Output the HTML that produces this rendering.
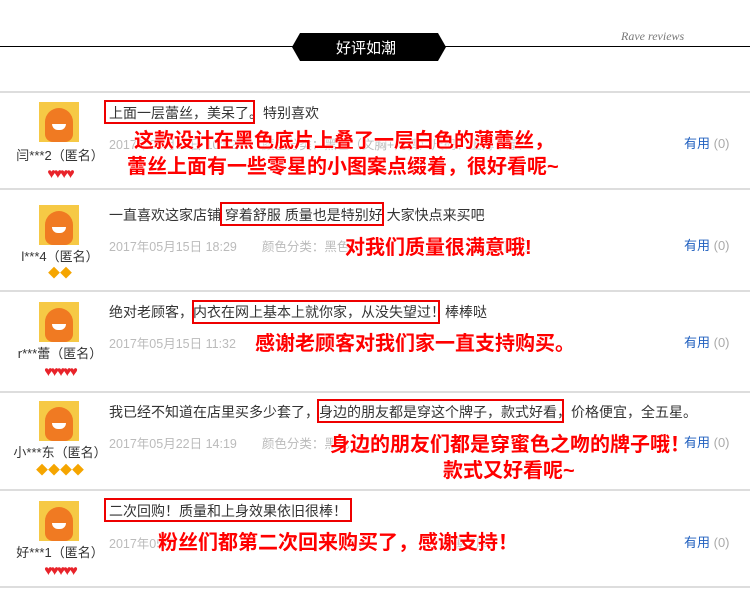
<!DOCTYPE html>
<html><head><meta charset="utf-8"><style>
*{margin:0;padding:0;box-sizing:border-box}
body{width:750px;height:609px;background:#fff;position:relative;overflow:hidden;font-family:"Liberation Sans","Noto Sans CJK SC",sans-serif;color:#333}
.a{position:absolute;white-space:nowrap}
.hr{position:absolute;left:0;width:750px;height:2px;background:#ddd}
.av{position:absolute;left:39px;width:40px;height:40px;background:#f6c945;overflow:hidden}
.av i{position:absolute;left:6px;top:6px;width:28px;height:34px;border-radius:14px 14px 8px 8px;background:#f07a22}
.av b{position:absolute;left:13px;top:22px;width:14px;height:6px;background:#fff;border-radius:0 0 7px 7px}
.nm{font-size:13px;color:#333;text-align:center;width:110px;left:5px}
.ic{font-size:14px;line-height:14px;color:#e8232a;text-align:center;width:110px;left:5px;letter-spacing:-2px}
.ic.y{color:#f5a500;font-size:12px;letter-spacing:0}
.t{font-size:14px;color:#333;left:109px}
.box{position:absolute;border:2px solid #e00}
.d{font-size:12.5px;color:#bbb;left:109px}
.u{font-size:13px;color:#1f5fbf;left:684px}
.u span{color:#aaa}
.r{font-size:20px;font-weight:bold;color:#f00;text-shadow:0 0 2px #fff,0 0 2px #fff,0 0 3px #fff}
</style></head><body>
<div style="position:absolute;left:0;top:46px;width:750px;height:1px;background:#000"></div>
<svg style="position:absolute;left:292px;top:33px" width="154" height="28"><polygon points="8,0 146,0 154,14 146,28 8,28 0,14" fill="#000"/></svg>
<div class="a" style="left:336px;top:37px;font-size:15px;color:#fff">好评如潮</div>
<div class="a" style="left:621px;top:29px;font-size:12px;font-style:italic;font-family:'Liberation Serif',serif;color:#777">Rave reviews</div>

<div class="hr" style="top:91px"></div>
<div class="hr" style="top:188px"></div>
<div class="hr" style="top:290px"></div>
<div class="hr" style="top:391px"></div>
<div class="hr" style="top:489px"></div>
<div class="hr" style="top:586px"></div>

<!-- row1 -->
<div class="av" style="top:102px"><i></i><b></b></div>
<div class="a nm" style="top:145px">闫***2（匿名）</div>
<div class="a ic" style="top:166px">♥♥♥♥</div>
<div class="a t" style="top:103px">上面一层蕾丝，美呆了。特别喜欢</div>
<div class="box" style="left:104px;top:100px;width:151px;height:24px"></div>
<div class="a d" style="top:134px">2017年05月15日 10:02　　颜色分类：黑色（文胸+内裤）尺码：上薄下厚）</div>
<div class="a u" style="top:133px">有用 <span>(0)</span></div>
<div class="a r" style="left:134px;top:124px">这款设计在黑色底片上叠了一层白色的薄蕾丝，</div>
<div class="a r" style="left:127px;top:150px">蕾丝上面有一些零星的小图案点缀着，很好看呢~</div>

<!-- row2 -->
<div class="av" style="top:205px"><i></i><b></b></div>
<div class="a nm" style="top:246px">l***4（匿名）</div>
<div class="a ic y" style="top:266px">◆◆</div>
<div class="a t" style="top:205px">一直喜欢这家店铺 穿着舒服 质量也是特别好 大家快点来买吧</div>
<div class="box" style="left:220px;top:202px;width:164px;height:24px"></div>
<div class="a d" style="top:236px">2017年05月15日 18:29　　颜色分类：黑色　　　　　　　　　　上薄下厚）</div>
<div class="a u" style="top:235px">有用 <span>(0)</span></div>
<div class="a r" style="left:345px;top:231px">对我们质量很满意哦!</div>

<!-- row3 -->
<div class="av" style="top:302px"><i></i><b></b></div>
<div class="a nm" style="top:343px">r***蕾（匿名）</div>
<div class="a ic" style="top:364px">♥♥♥♥♥</div>
<div class="a t" style="top:302px">绝对老顾客，内衣在网上基本上就你家，从没失望过！棒棒哒</div>
<div class="box" style="left:192px;top:300px;width:248px;height:24px"></div>
<div class="a d" style="top:333px">2017年05月15日 11:32</div>
<div class="a u" style="top:332px">有用 <span>(0)</span></div>
<div class="a r" style="left:255px;top:327px">感谢老顾客对我们家一直支持购买。</div>

<!-- row4 -->
<div class="av" style="top:401px"><i></i><b></b></div>
<div class="a nm" style="top:442px">小***东（匿名）</div>
<div class="a ic y" style="top:463px">◆◆◆◆</div>
<div class="a t" style="top:402px">我已经不知道在店里买多少套了，身边的朋友都是穿这个牌子，款式好看，价格便宜，全五星。</div>
<div class="box" style="left:317px;top:399px;width:247px;height:24px"></div>
<div class="a d" style="top:433px">2017年05月22日 14:19　　颜色分类：黑色</div>
<div class="a u" style="top:432px">有用 <span>(0)</span></div>
<div class="a r" style="left:330px;top:428px">身边的朋友们都是穿蜜色之吻的牌子哦！</div>
<div class="a r" style="left:443px;top:454px">款式又好看呢~</div>

<!-- row5 -->
<div class="av" style="top:501px"><i></i><b></b></div>
<div class="a nm" style="top:542px">好***1（匿名）</div>
<div class="a ic" style="top:563px">♥♥♥♥♥</div>
<div class="a t" style="top:501px">二次回购！质量和上身效果依旧很棒！</div>
<div class="box" style="left:104px;top:498px;width:248px;height:24px"></div>
<div class="a d" style="top:533px">2017年05月　　　　　　　　　　　　文胸），　　　　　　上薄下厚）</div>
<div class="a u" style="top:532px">有用 <span>(0)</span></div>
<div class="a r" style="left:158px;top:526px">粉丝们都第二次回来购买了，感谢支持！</div>
</body></html>
